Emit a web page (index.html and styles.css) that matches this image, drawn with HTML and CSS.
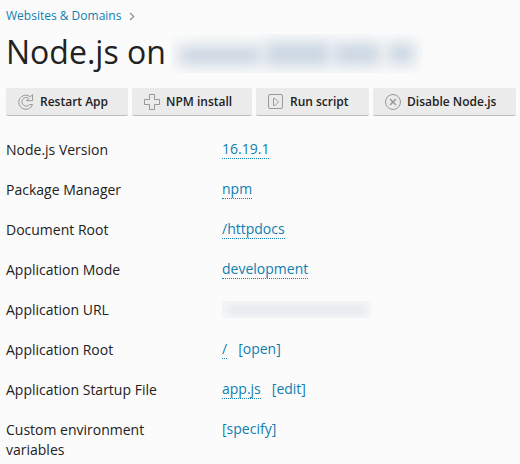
FILE: index.html
```html
<!DOCTYPE html>
<html lang="en">
<head>
<meta charset="utf-8">
<title>Node.js</title>
<link rel="stylesheet" href="styles.css">
</head>
<body>
<nav class="crumbs"><a>Websites &amp; Domains</a><svg width="6" height="9" viewBox="0 0 6 9"><path d="M1 .8 4.700 4.500 1 8.200"/></svg></nav>
<h1 class="title"><span class="title-text">Node.js on</span><span class="mask mask-domain"><i class="d1"></i><i class="d2"></i><i class="d3"></i><i class="d4"></i></span></h1>
<div class="toolbar">
  <button class="btn restart"><svg width="16" height="16" viewBox="0 0 16 16"><path d="M14.500.7v6H8.500l2.300-2.300A4.300 4.300 0 1 0 11.600 10.500h3A7.100 7.100 0 1 1 12.400 2.800z"/></svg><span>Restart App</span></button>
  <button class="btn npm"><svg width="16" height="16" viewBox="0 0 16 16"><path d="M5.500.5h5v5h5v5h-5v5h-5v-5h-5v-5h5z"/></svg><span>NPM install</span></button>
  <button class="btn run"><svg width="16" height="16" viewBox="0 0 16 16"><rect x=".5" y=".5" width="14" height="14" rx="1.500"/><path d="M5.500 4.500v7h1.500L10 8.500V7.500L7 4.500z"/></svg><span>Run script</span></button>
  <button class="btn disable"><svg width="16" height="16" viewBox="0 0 16 16"><circle cx="8" cy="8" r="7.500"/><path class="cross" d="M5 5l6 6M11 5l-6 6"/></svg><span>Disable Node.js</span></button>
</div>
<dl class="props">
  <div class="row"><dt>Node.js Version</dt><dd><a class="edit">16.19.1</a></dd></div>
  <div class="row"><dt>Package Manager</dt><dd><a class="edit">npm</a></dd></div>
  <div class="row"><dt>Document Root</dt><dd><a class="edit">/httpdocs</a></dd></div>
  <div class="row"><dt>Application Mode</dt><dd><a class="edit">development</a></dd></div>
  <div class="row"><dt>Application URL</dt><dd><span class="mask mask-url"><i></i></span></dd></div>
  <div class="row"><dt>Application Root</dt><dd><a class="edit">/</a><a>[open]</a></dd></div>
  <div class="row"><dt>Application Startup File</dt><dd><a class="edit">app.js</a><a>[edit]</a></dd></div>
  <div class="row"><dt>Custom environment variables</dt><dd><a>[specify]</a></dd></div>
</dl>
</body>
</html>
```
FILE: styles.css
```css
* { box-sizing: border-box; }
body {
  margin: 0;
  padding: 6px 4px 0 6px;
  height: 464px;
  overflow: hidden;
  background: #fbfbfb;
  color: #222;
  font: 14px/20px "Open Sans", sans-serif;
}
a { color: #0f7eb0; }
svg { fill: none; stroke: #999; flex: none; }
.crumbs { display: flex; align-items: center; gap: 8px; height: 20px; font-size: 12px; }
.crumbs svg { stroke: #888; stroke-width: 1.2; }
.title { display: flex; margin: 4px 0 0; height: 44px; font-size: 32px; line-height: 44px; font-weight: 400; }
.title-text { width: 165px; white-space: nowrap; }
.mask { display: flex; overflow: hidden; background: #f9fafa; }
.mask i { background: #cbd6e2; filter: blur(7px); }
.mask-domain { width: 252px; height: 39px; margin-top: 4px; align-items: center; gap: 4px; padding: 0 8px; }
.d1 { width: 82px; height: 19px; margin-top: 4px; }
.d2 { width: 65px; height: 24px; }
.d3 { width: 46px; height: 22px; }
.d4 { width: 26px; height: 21px; margin-left: 4px; }
.toolbar { display: flex; gap: 4px; margin-top: 14px; }
.btn {
  display: flex;
  align-items: center;
  gap: 6px;
  height: 28px;
  padding: 0 0 0 12px;
  border: 0;
  border-bottom: 1px solid #bdbdbd;
  border-radius: 2px;
  background: #ebebeb;
  color: #222;
  font: 600 12px/20px "Open Sans", sans-serif;
  white-space: nowrap;
}
.restart { width: 122px; }
.npm { width: 120px; }
.run { width: 113px; }
.disable { width: 143px; }
.cross { stroke-width: 1.5; }
.props { margin: 24px 0 0; }
.row { display: flex; min-height: 40px; }
.row dt { width: 216px; padding-right: 40px; }
.row dd { display: flex; align-items: flex-start; gap: 11px; margin: 0; }
.row dd a { line-height: 18px; }
.edit { border-bottom: 1px dotted #0f7eb0; }
.mask-url { width: 149px; height: 17px; margin-top: 1px; align-items: center; padding: 0 5px; background: #f5f6f7; }
.mask-url i { width: 139px; height: 7px; background: #dfe5ea; filter: blur(4px); }
```
